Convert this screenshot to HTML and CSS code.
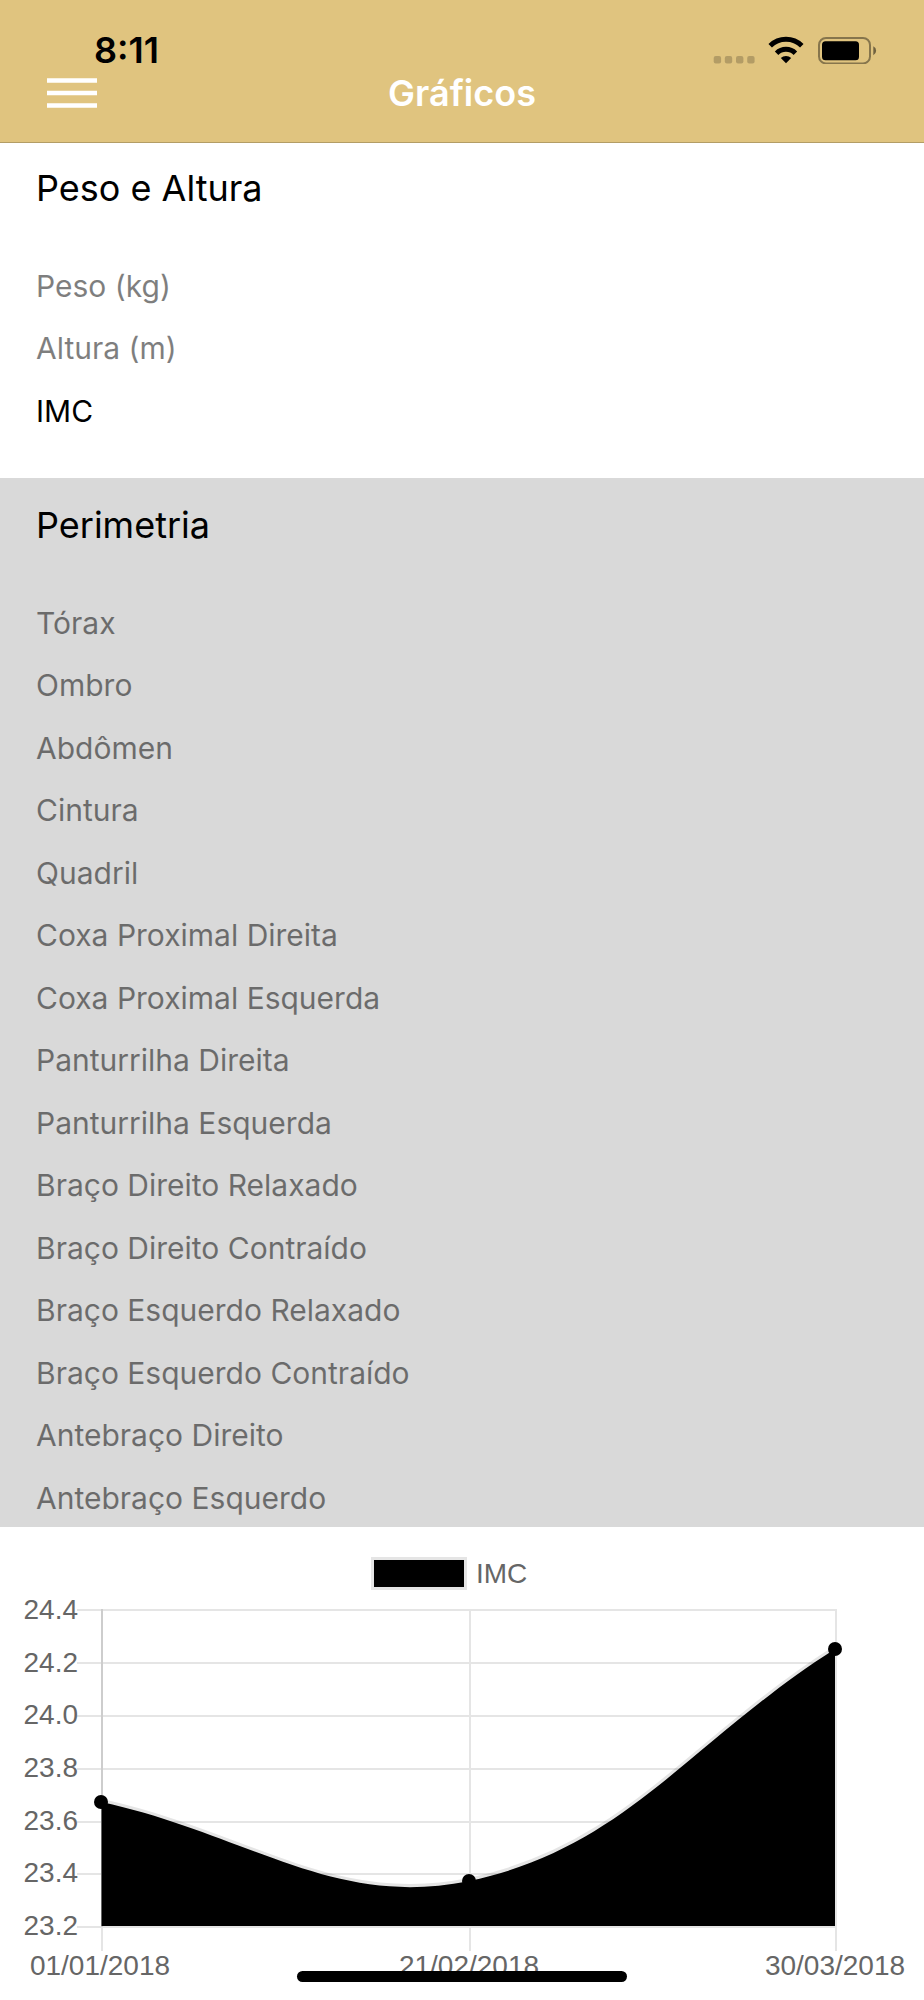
FILE: index.html
```html
<!DOCTYPE html>
<html lang="pt-BR">
<head>
<meta charset="utf-8">
<meta name="viewport" content="width=device-width, initial-scale=1">
<title>Gráficos</title>
<link rel="stylesheet" href="styles.css">
</head>
<body>
<div class="app">
  <header class="header">
    <div class="status">
      <span class="status-time">8:11</span>
      <svg class="status-icons" width="164" height="28" viewBox="0 0 164 28" aria-hidden="true">
        <g fill="#000" fill-opacity=".2">
          <rect x="0.7" y="20" width="7.4" height="7.4" rx="2"/>
          <rect x="11.8" y="20" width="7.4" height="7.4" rx="2"/>
          <rect x="23" y="20" width="7.4" height="7.4" rx="2"/>
          <rect x="34.2" y="20" width="7.4" height="7.4" rx="2"/>
        </g>
        <g fill="none" stroke="#000" stroke-width="5">
          <path d="M57.2 9.8a22.6 22.6 0 0 1 31.6 0"/>
          <path d="M63.6 17.2a13.4 13.4 0 0 1 18.8 0"/>
        </g>
        <path d="M73 27.3l-5.2-5.3a7.6 7.6 0 0 1 10.4 0z"/>
        <rect x="106" y="2" width="51" height="25.4" rx="7" fill="none" stroke="#000" stroke-opacity=".4" stroke-width="2"/>
        <rect x="109" y="5.2" width="37" height="19" rx="3.5"/>
        <path d="M160.300 10.200a5 5 0 0 1 0 9z" fill-opacity=".5"/>
      </svg>
    </div>
    <div class="navbar">
      <button class="menu" type="button" aria-label="Menu">
        <svg width="50" height="30" viewBox="0 0 50 30" aria-hidden="true"><path d="M0 2.500h50M0 15h50M0 27.500h50" stroke="#fff" stroke-width="4.300"/></svg>
      </button>
      <h1 class="title">Gráficos</h1>
    </div>
  </header>

  <main class="content">
    <section class="group group-first">
      <h2 class="group-title">Peso e Altura</h2>
      <ul class="options">
        <li><button class="option" type="button">Peso (kg)</button></li>
        <li><button class="option" type="button">Altura (m)</button></li>
        <li><button class="option selected" type="button" aria-pressed="true">IMC</button></li>
      </ul>
    </section>
    <section class="group group-shaded">
      <h2 class="group-title">Perimetria</h2>
      <ul class="options">
        <li><button class="option" type="button">Tórax</button></li>
        <li><button class="option" type="button">Ombro</button></li>
        <li><button class="option" type="button">Abdômen</button></li>
        <li><button class="option" type="button">Cintura</button></li>
        <li><button class="option" type="button">Quadril</button></li>
        <li><button class="option" type="button">Coxa Proximal Direita</button></li>
        <li><button class="option" type="button">Coxa Proximal Esquerda</button></li>
        <li><button class="option" type="button">Panturrilha Direita</button></li>
        <li><button class="option" type="button">Panturrilha Esquerda</button></li>
        <li><button class="option" type="button">Braço Direito Relaxado</button></li>
        <li><button class="option" type="button">Braço Direito Contraído</button></li>
        <li><button class="option" type="button">Braço Esquerdo Relaxado</button></li>
        <li><button class="option" type="button">Braço Esquerdo Contraído</button></li>
        <li><button class="option" type="button">Antebraço Direito</button></li>
        <li><button class="option" type="button">Antebraço Esquerdo</button></li>
      </ul>
    </section>
  </main>

  <svg class="chart" viewBox="0 0 924 473" role="img" aria-label="Gráfico de IMC">
    <rect class="outline" x="374" y="33" width="90" height="27"/>
    <rect x="374" y="33" width="90" height="27"/>
    <text x="476" y="56">IMC</text>
    <path class="grid" d="M77 83H837M77 136H837M77 189H837M77 242H837M77 295H837M77 347H837M77 400H837M102 82V424M470 82V424M836 82V424"/>
    <path class="grid" d="M102 82V400"/>
    <g class="y-labels">
      <text x="78" y="92">24.4</text>
      <text x="78" y="145">24.2</text>
      <text x="78" y="197">24.0</text>
      <text x="78" y="250">23.8</text>
      <text x="78" y="303">23.6</text>
      <text x="78" y="355">23.4</text>
      <text x="78" y="408">23.2</text>
    </g>
    <g class="x-labels">
      <text x="100" y="448">01/01/2018</text>
      <text x="469" y="448">21/02/2018</text>
      <text x="835" y="448">30/03/2018</text>
    </g>
    <path d="M101.500 275C248 307 333 382 469 354C626 321 689 215 835 122V399H101.500Z"/>
    <path class="curve" d="M101.500 275C248 307 333 382 469 354C626 321 689 215 835 122"/>
    <circle cx="101" cy="275" r="7"/>
    <circle cx="469" cy="354" r="7"/>
    <circle cx="835" cy="122" r="7"/>
  </svg>
  <div class="home-indicator"></div>
</div>
</body>
</html>
```
FILE: styles.css
```css
* {
  box-sizing: border-box;
}

body {
  margin: 0;
  background: #fff;
  color: #000;
  font-family: Inter, "Liberation Sans", sans-serif;
}

.app {
  position: relative;
  display: flex;
  flex-direction: column;
  height: 100vh;
}

.header {
  flex: none;
  padding: 33px 47px 24px;
  background: #e0c47f;
  border-bottom: 1px solid #b39d65;
}

.status {
  display: flex;
  align-items: center;
  justify-content: space-between;
  height: 34px;
  padding-left: 47px;
}

.status-time {
  font-size: 36px;
  font-weight: 600;
  line-height: 34px;
}

.navbar {
  display: grid;
  grid-template-columns: 1fr auto 1fr;
  align-items: center;
  height: 51px;
}

.menu {
  justify-self: start;
  display: flex;
  padding: 0;
  border: 0;
  background: none;
}

.title {
  margin: 0;
  color: #fff;
  font-size: 36px;
  font-weight: 600;
  line-height: 48px;
}

.content {
  flex: 1;
  min-height: 0;
  overflow-y: auto;
  scrollbar-width: none;
}

.group {
  padding: 23px 36px 36px;
}

.group-first {
  padding-top: 21px;
}

.group-shaded {
  background: #d9d9d9;
}

.group-title {
  margin: 0 0 43px;
  font-size: 36px;
  font-weight: 400;
  line-height: 48px;
}

.options {
  margin: 0;
  padding: 0;
  list-style: none;
}

.options li:nth-child(even) {
  padding-bottom: 1px;
}

.option {
  display: block;
  width: 100%;
  padding: 0;
  border: 0;
  background: none;
  color: #000;
  font: 400 30px/62px Inter, "Liberation Sans", sans-serif;
  text-align: left;
  opacity: 0.5;
}

.option.selected {
  opacity: 1;
}

.chart {
  flex: none;
  display: block;
  width: 100%;
  background: #fff;
}

.chart text {
  fill: #666;
  font: 28px "Liberation Sans", sans-serif;
}

.y-labels {
  text-anchor: end;
}

.x-labels {
  text-anchor: middle;
}

.grid {
  fill: none;
  stroke: rgba(0, 0, 0, 0.1);
  stroke-width: 2;
}

.outline,
.curve {
  fill: none;
  stroke: rgba(0, 0, 0, 0.1);
  stroke-width: 6;
}

.home-indicator {
  position: absolute;
  bottom: 18px;
  left: 50%;
  width: 330px;
  height: 11px;
  margin-left: -165px;
  border-radius: 6px;
  background: #000;
}
```
